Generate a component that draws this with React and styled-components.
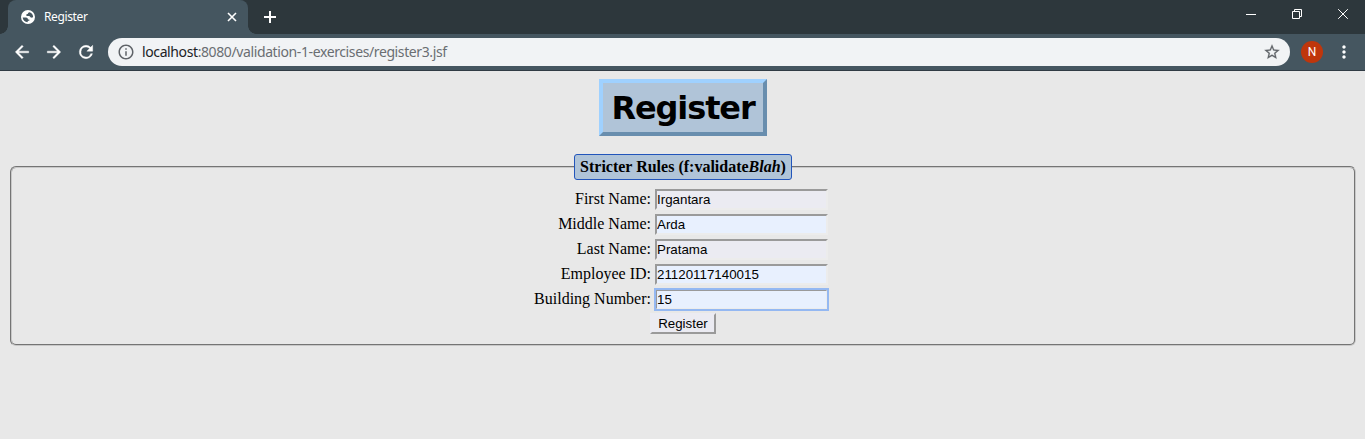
import React from "react";
import styled, { createGlobalStyle } from "styled-components";

const GlobalStyle = createGlobalStyle`
  * { box-sizing: border-box; }
  body { margin: 0; background: #e8e8e8; overflow: hidden; }
`;

const Window = styled.div`
  height: 439px;
  display: flex;
  flex-direction: column;
  background: #e8e8e8;
`;

const TabStrip = styled.div`
  height: 34px;
  flex: none;
  display: flex;
  background: #2d373c;
  padding-left: 8px;
`;

const Tab = styled.div`
  position: relative;
  width: 240px;
  height: 34px;
  display: flex;
  align-items: center;
  padding: 0 10px 0 12px;
  border-radius: 8px 8px 0 0;
  background: #455660;
  &::before, &::after {
    content: "";
    position: absolute;
    bottom: 0;
    width: 8px;
    height: 8px;
  }
  &::before { left: -8px; background: radial-gradient(circle at 0 0, transparent 7.5px, #455660 8px); }
  &::after { right: -8px; background: radial-gradient(circle at 100% 0, transparent 7.5px, #455660 8px); }
`;

const TabTitle = styled.span`
  flex: 1;
  margin-left: 8px;
  font: 12px/16px "Noto Sans", "Open Sans", sans-serif;
  letter-spacing: -0.38px;
  color: #fff;
`;

const Icon = styled.svg`
  display: block;
  flex: none;
  width: ${(p) => p.$size}px;
  height: ${(p) => p.$size}px;
`;

const NewTab = styled.div`
  margin: 9px 0 0 14px;
`;

const WindowControls = styled.div`
  margin-left: auto;
  display: flex;
  gap: 30px;
  padding: 6px 14px 0 0;
`;

const Toolbar = styled.div`
  height: 37px;
  flex: none;
  display: flex;
  align-items: center;
  background: #455660;
  border-bottom: 1px solid #303b44;
  padding: 0 10px 0 12px;
`;

const NavButtons = styled.div`
  display: flex;
  gap: 12px;
  width: 96px;
`;

const AddressBar = styled.div`
  flex: none;
  width: 1182px;
  height: 28px;
  border-radius: 14px;
  background: #f1f3f5;
  display: flex;
  align-items: center;
  padding: 0 9px;
`;

const Url = styled.span`
  flex: 1;
  margin-left: 7px;
  font: 14px/20px "Noto Sans", "Open Sans", sans-serif;
  letter-spacing: -0.39px;
  color: #6a6e72;
  b { font-weight: 400; color: #202124; }
`;

const Avatar = styled.div`
  width: 22px;
  height: 22px;
  margin: 0 11px 0 11px;
  border-radius: 50%;
  background: #bf360c;
  color: #fff;
  font: 12px/22px Roboto, sans-serif;
  text-align: center;
`;

const Page = styled.main`
  padding: 8px 9px 0 10px;
  display: flex;
  flex-direction: column;
  align-items: center;
`;

const Heading = styled.h1`
  margin: 0 0 18px;
  width: 168px;
  height: 57px;
  border: 4px solid;
  border-color: #9fd1ff #698eae #698eae #9fd1ff;
  background: #b0c4d8;
  font: bold 32px/51px Verdana, "DejaVu Sans", sans-serif;
  letter-spacing: -1.1px;
  text-align: center;
  white-space: nowrap;
  color: #000;
`;

const Fieldset = styled.fieldset`
  width: 1346px;
  height: 192px;
  margin: 0;
  padding: 7px 0 0;
  border: 2px groove #c8c8c8;
  border-radius: 6px;
`;

const Legend = styled.legend`
  width: 218px;
  height: 26px;
  margin: 0 auto;
  padding: 0;
  border: 1px solid #2255bb;
  border-radius: 3px;
  background: #b0c4d8;
  font: bold 16px/24px "Liberation Serif", "Times New Roman", serif;
  text-align: center;
  white-space: nowrap;
`;

const Form = styled.form`
  display: flex;
  flex-direction: column;
  align-items: center;
`;

const Row = styled.label`
  height: 25px;
  width: 306px;
  padding-right: 8px;
  display: flex;
  justify-content: flex-end;
  align-items: flex-start;
  gap: 4px;
  font: 16px/24px "Liberation Serif", "Times New Roman", serif;
  color: #000;
`;

const Field = styled.input`
  width: 173px;
  height: 21px;
  margin: 2px 0;
  padding: 1px 0;
  border: 2px solid;
  border-color: #9a9a9a #ececec #ececec #9a9a9a;
  background: ${(p) => (p.$filled ? "#e8f0fe" : "#ebebf2")};
  font: 13.333px "Liberation Sans", Arial, sans-serif;
  color: #000;
  outline: ${(p) => (p.$active ? "2px solid #94b8f2" : "none")};
  outline-offset: -1px;
`;

const Submit = styled.button`
  width: 66px;
  height: 21px;
  margin-top: 1px;
  padding: 0;
  border: 2px solid;
  border-color: #ebebf2 #9a9a9a #9a9a9a #ebebf2;
  background: #ebebf2;
  font: 13.333px/17px "Liberation Sans", Arial, sans-serif;
  color: #000;
`;

const FIELDS = [
  { label: "First Name:", value: "Irgantara" },
  { label: "Middle Name:", value: "Arda", filled: true },
  { label: "Last Name:", value: "Pratama" },
  { label: "Employee ID:", value: "21120117140015", filled: true },
  { label: "Building Number:", value: "15", filled: true, active: true },
];

function Glyph({ d, size = 20, color = "#fff", bold = 0 }) {
  return (
    <Icon $size={size} viewBox="0 0 24 24" fill={color} stroke={color} strokeWidth={bold}>
      <path d={d} />
    </Icon>
  );
}

function WindowGlyph({ d }) {
  return (
    <Icon $size={16} viewBox="0 0 16 16" fill="none" stroke="#fff">
      <path d={d} />
    </Icon>
  );
}

const ICONS = {
  globe: "M12 1.5A10.5 10.5 0 1 0 12 22.500A10.500 10.500 0 1 0 12 1.500zM4 12.800H9c2.100 0 2.600 1.300 3 2.900h2v2.100c-1.700 0-2.700.6-2.700 2.200-3.900-.3-7.100-3.300-7.300-7.200zM14.500 4.800c3.100 1.100 5.200 3.800 5.200 7.200-.9 1-2.200 1.300-3.500.8-1.200-.5-1.300-2.200-2.600-2.200h-2.400c-1.300 0-1.800-.7-1.800-1.600 0-1.300.9-1.600 2.300-1.600.2-1.500 1.200-2.100 2.800-2.600z",
  back: "M20 11H7.83l5.59-5.59L12 4l-8 8 8 8 1.41-1.41L7.83 13H20v-2z",
  forward: "M12 4l-1.41 1.41L16.17 11H4v2h12.17l-5.58 5.59L12 20l8-8z",
  reload: "M17.65 6.35A7.95 7.95 0 0 0 12 4a8 8 0 1 0 7.73 10h-2.08A6 6 0 1 1 12 6c1.66 0 3.14.69 4.22 1.78L13 11h7V4l-2.35 2.35z",
  info: "M11 17h2v-6h-2v6zm1-15C6.48 2 2 6.48 2 12s4.48 10 10 10 10-4.48 10-10S17.52 2 12 2zm0 18c-4.41 0-8-3.59-8-8s3.59-8 8-8 8 3.59 8 8-3.59 8-8 8zM11 9h2V7h-2v2z",
  star: "M22 9.24l-7.19-.62L12 2 9.19 8.63 2 9.24l5.46 4.73L5.82 21 12 17.27 18.18 21l-1.63-7.03L22 9.24zM12 15.4l-3.76 2.27 1-4.28-3.32-2.88 4.38-.38L12 6.1l1.71 4.04 4.38.38-3.32 2.88 1 4.28L12 15.4z",
  more: "M12 8c1.1 0 2-.9 2-2s-.9-2-2-2-2 .9-2 2 .9 2 2 2zm0 2c-1.1 0-2 .9-2 2s.9 2 2 2 2-.9 2-2-.9-2-2-2zm0 6c-1.1 0-2 .9-2 2s.9 2 2 2 2-.9 2-2-.9-2-2-2z",
};

export default function App() {
  return (
    <Window>
      <GlobalStyle />
      <TabStrip>
        <Tab>
          <Icon $size={16} viewBox="0 0 24 24" fill="#fff" fillRule="evenodd">
            <path d={ICONS.globe} />
          </Icon>
          <TabTitle>Register</TabTitle>
          <Icon $size={12} viewBox="0 0 12 12" stroke="#fff" strokeWidth="1.6">
            <path d="M2 2l8 8M10 2l-8 8" />
          </Icon>
        </Tab>
        <NewTab>
          <Icon $size={16} viewBox="0 0 16 16" fill="#fff">
            <path d="M7 2h2v5h5v2H9v5H7V9H2V7h5z" />
          </Icon>
        </NewTab>
        <WindowControls>
          <WindowGlyph d="M3 8.5h10" />
          <WindowGlyph d="M3.5 5.5h7v7h-7zM5.5 5.5v-2h7v7h-2" />
          <WindowGlyph d="M3.2 3.2l9.6 9.6M12.8 3.2l-9.6 9.6" />
        </WindowControls>
      </TabStrip>
      <Toolbar>
        <NavButtons>
          <Glyph d={ICONS.back} bold={0.5} />
          <Glyph d={ICONS.forward} bold={0.5} />
          <Glyph d={ICONS.reload} bold={0.5} />
        </NavButtons>
        <AddressBar>
          <Glyph d={ICONS.info} size={18} color="#5f6368" />
          <Url><b>localhost</b>:8080/validation-1-exercises/register3.jsf</Url>
          <Glyph d={ICONS.star} size={18} color="#5f6368" bold={0.3} />
        </AddressBar>
        <Avatar>N</Avatar>
        <Glyph d={ICONS.more} size={20} />
      </Toolbar>
      <Page>
        <Heading>Register</Heading>
        <Fieldset>
          <Legend>Stricter Rules (f:validate<i>Blah</i>)</Legend>
          <Form>
            {FIELDS.map((f) => (
              <Row key={f.label}>
                {f.label}
                <Field defaultValue={f.value} $filled={f.filled} $active={f.active} />
              </Row>
            ))}
            <Submit type="button">Register</Submit>
          </Form>
        </Fieldset>
      </Page>
    </Window>
  );
}
